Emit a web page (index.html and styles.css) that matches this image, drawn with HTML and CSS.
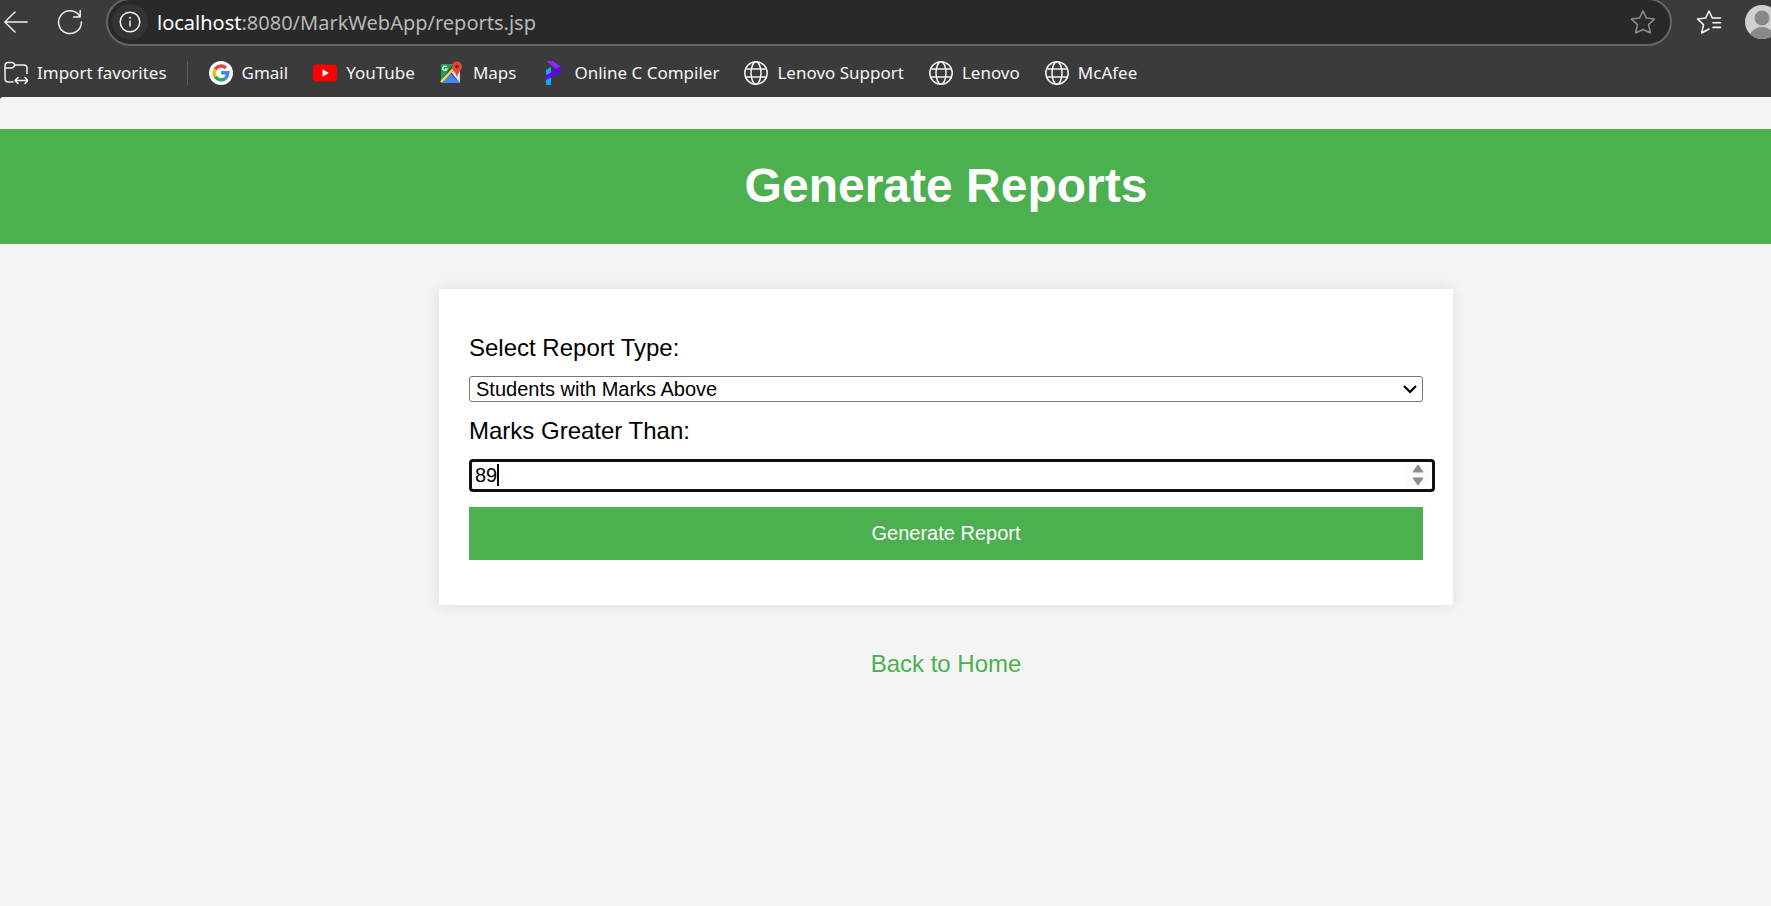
FILE: index.html
```html
<!DOCTYPE html>
<html lang="en">
<head>
<meta charset="utf-8">
<title>Generate Reports</title>
<link rel="stylesheet" href="styles.css">
</head>
<body>
<svg class="defs" aria-hidden="true">
  <symbol id="globe" viewBox="0 0 24 24"><g fill="none" stroke="#f4f4f4" stroke-width="1.5"><circle cx="12" cy="12" r="11.2"/><ellipse cx="12" cy="12" rx="5" ry="11.2"/><path d="M1.7 8h20.6M1.7 16h20.6"/></g></symbol>
</svg>
<div class="browser">
  <div class="toolbar">
    <button class="tool" aria-label="Back"><svg width="24" height="24" viewBox="0 0 24 24" fill="none" stroke="#f0f0f0" stroke-width="1.5" stroke-linecap="round" stroke-linejoin="round"><path d="M23.2 12H1M11 2 .8 12 11 22"/></svg></button>
    <button class="tool reload" aria-label="Refresh"><svg width="26" height="26" viewBox="0 0 26 26" fill="none" stroke="#f0f0f0" stroke-width="1.5" stroke-linecap="round" stroke-linejoin="round"><path d="M24.4 13A11.4 11.4 0 1 1 22.6 7M23.2 1.5V8H16.5"/></svg></button>
    <div class="address">
      <button class="info" aria-label="Site information"><svg width="22" height="22" viewBox="0 0 22 22" fill="none" stroke="#f4f4f4" stroke-width="1.5"><circle cx="11" cy="11" r="9.8"/><path d="M11 9.5v6"/><circle cx="11" cy="6.8" r="1" fill="#f4f4f4" stroke="none"/></svg></button>
      <span class="url"><span class="host">localhost</span>:8080/MarkWebApp/reports.jsp</span>
      <button class="tool star" aria-label="Add to favorites"><svg width="26" height="26" viewBox="0 0 26 26" fill="none" stroke="#8d8d8d" stroke-width="1.5" stroke-linejoin="round"><path d="m13 1.8 3.4 7.3 8 1-5.900 5.500L20.500 24 13 20.500 5.500 24l2-8.400L1.500 10.100l8-1z"/></svg></button>
    </div>
    <button class="tool favorites" aria-label="Favorites"><svg width="26" height="26" viewBox="0 0 26 26" fill="none" stroke="#f8f8f8" stroke-width="1.6" stroke-linecap="round" stroke-linejoin="round"><path d="M24.500 9H16.300L13 2 9.700 9 1.500 10l6 5.600L5.700 24l7.300-4M17 13.700h7.500M17 18.400h7.500"/></svg></button>
    <button class="tool profile" aria-label="Profile"><svg width="34" height="34" viewBox="0 0 34 34"><clipPath id="face"><circle cx="17" cy="17" r="17"/></clipPath><g clip-path="url(#face)"><path fill="#d2d0ce" d="M0 0h34v34H0z"/><circle cx="17" cy="13" r="7.500" fill="#8a8886"/><circle cx="17" cy="35" r="13" fill="#8a8886"/></g></svg></button>
  </div>
  <nav class="bookmarks">
    <a href="#" class="bookmark"><svg width="24" height="24" viewBox="0 0 24 24" fill="none" stroke="#f0f0f0" stroke-width="1.5" stroke-linecap="round" stroke-linejoin="round"><path d="M9 21H4.500Q1 21 1 17.500V5Q1 1.500 4 1.500h3.500q1.500 0 2.500 1l1 1.500h8.500Q23 4 23 7v5.500M1 7h6q1.500 0 2.500-1L11 4M11.500 19.500h12M14 16.500l-3 3 3 3M21 16.500l3 3-3 3"/></svg>Import favorites</a>
    <span class="divider"></span>
    <a href="#" class="bookmark"><svg width="24" height="24" viewBox="0 0 24 24" fill="none" stroke-width="3.400"><circle cx="12" cy="12" r="12" fill="#fff"/><path stroke="#ea4335" d="M6.200 8.300a7 7 0 0 1 10.700-1.400"/><path stroke="#fbbc04" d="M6.200 8.300a7 7 0 0 0 0 7.400"/><path stroke="#34a853" d="M6.200 15.700a7 7 0 0 0 10.200 1.700"/><path stroke="#4285f4" d="M16.400 17.400Q18.800 15.200 18.800 11.800H12.200"/></svg>Gmail</a>
    <a href="#" class="bookmark"><svg width="24" height="24" viewBox="0 0 24 24"><rect y="3.500" width="24" height="17" rx="4" fill="#f00"/><path fill="#fff" d="m9.500 8.300 6.300 3.700-6.300 3.700z"/></svg>YouTube</a>
    <a href="#" class="bookmark"><svg width="24" height="24" viewBox="0 0 24 24"><path fill="#1e9c58" d="M1 3h12L1 20z"/><path fill="#4285f4" d="m10 12 10 10H1z"/><path fill="#dfe3e8" d="m11 11 9-3v14z"/><path stroke="#fdd835" stroke-width="2.500" d="M1 21 15 6"/><path fill="#e5473a" d="M11.800 5.600a5.100 5.100 0 0 1 10.200 0C22 10 17.600 11 17 17c-.6-6-5.200-7-5.200-11.400z"/><circle cx="17" cy="5.500" r="1.800" fill="#7b211b"/><path fill="none" stroke="#fff" stroke-width="1.200" d="M6.800 6A2.200 2.200 0 1 0 7 8H5"/></svg>Maps</a>
    <a href="#" class="bookmark"><svg width="24" height="24" viewBox="0 0 24 24"><path fill="#0aa8f8" d="M5 9l5-3v18H5z"/><path fill="#8c2cf0" d="M5 0h7l8 6v5l-4-2z"/><path fill="#6200ea" d="M20 6v5L5 19v-5l11-7z"/><path fill="#0aa8f8" d="m5 9 5-3v6l-5 2z"/></svg>Online C Compiler</a>
    <a href="#" class="bookmark"><svg width="24" height="24"><use href="#globe"/></svg>Lenovo Support</a>
    <a href="#" class="bookmark"><svg width="24" height="24"><use href="#globe"/></svg>Lenovo</a>
    <a href="#" class="bookmark"><svg width="24" height="24"><use href="#globe"/></svg>McAfee</a>
  </nav>
</div>
<div class="page">
  <header class="banner"><h1>Generate Reports</h1></header>
  <main class="content">
    <form class="card">
      <label for="type">Select Report Type:</label>
      <div class="field">
        <select id="type" class="select"><option>Students with Marks Above</option></select>
        <svg class="chevron" width="14" height="9" viewBox="0 0 14 9" fill="none" stroke="#000" stroke-width="2.200"><path d="m1 1 6 6 6-6"/></svg>
      </div>
      <label for="marks">Marks Greater Than:</label>
      <div class="field wide">
        <input id="marks" class="number" type="number" value="89">
        <span class="caret"></span>
        <svg class="spinner" width="22" height="22" viewBox="0 0 22 22"><path fill="#fafafa" d="M0 0h22v22H0z"/><path fill="#8b8b8b" stroke="#8b8b8b" stroke-linejoin="round" d="m11 1 5 7H6zM11 21l5-7H6z"/></svg>
      </div>
      <button type="submit" class="submit">Generate Report</button>
    </form>
    <a href="#" class="home">Back to Home</a>
  </main>
</div>
</body>
</html>
```
FILE: styles.css
```css
* { box-sizing: border-box; }
body {
  margin: 0;
  min-height: 100vh;
  overflow-x: hidden;
  background: #3b3b3b;
  font-family: "Liberation Sans", Arial, sans-serif;
  display: flex;
  flex-direction: column;
}
button { border: 0; background: none; padding: 0; font: inherit; }
svg { display: block; flex: none; }
.defs { position: absolute; width: 0; height: 0; }

.browser { background: #3b3b3b; font-family: "Noto Sans", sans-serif; overflow: hidden; }
.toolbar { display: flex; align-items: center; height: 44px; padding-left: 4px; }
.tool { display: flex; flex: none; }
.reload { margin: 0 23px 0 29px; }
.address {
  flex: 1;
  display: flex;
  align-items: center;
  height: 48px;
  padding: 0 14px 0 4px;
  border: 2px solid #666;
  border-radius: 24px;
  background: #292929;
}
.info {
  display: grid;
  place-items: center;
  width: 36px;
  height: 36px;
  border-radius: 50%;
  background: #343434;
}
.url { flex: 1; margin-left: 9px; font-size: 20px; color: #b8b8b8; }
.host { color: #fff; }
.favorites { margin: 0 23px 0 24px; }
.profile { margin-right: -8px; }

.bookmarks { display: flex; align-items: center; gap: 25px; height: 53px; padding: 8px 4px 3px; }
.bookmark {
  display: flex;
  align-items: center;
  gap: 9px;
  font-size: 17px;
  line-height: 24px;
  color: #f4f4f4;
  text-decoration: none;
  white-space: nowrap;
}
.divider { width: 1px; height: 24px; margin: 0 -4px 0 -5px; background: #5c5c5c; }

.page {
  flex: 1;
  padding-top: 32px;
  border-top-left-radius: 3px;
  background: #f4f4f4;
  font-size: 24px;
  line-height: 27px;
}
.banner {
  padding: 29px 0 31px 121px;
  background: #4caf50;
  color: #fff;
  text-align: center;
}
.banner h1 { margin: 0; font-size: 48px; line-height: 55px; }
.content {
  display: flex;
  flex-direction: column;
  align-items: center;
  padding: 45px 0 0 121px;
}
.card {
  width: 62%;
  min-width: 600px;
  max-width: 1014px;
  padding: 45px 30px;
  background: #fff;
  box-shadow: 0 0 15px rgba(0, 0, 0, 0.1);
}
.card label { display: block; }
.field { position: relative; margin: 15px 0; }
.select, .number {
  display: block;
  width: 100%;
  margin: 0;
  appearance: none;
  background: #fff;
  color: #000;
  font-family: inherit;
  font-size: 20px;
}
.select {
  height: 26px;
  padding: 0 6px;
  border: 1px solid #767676;
  border-radius: 3px;
  line-height: 24px;
}
.chevron { position: absolute; right: 6px; top: 9px; }
.wide { margin-right: -12px; }
.number {
  height: 33px;
  padding: 0 3px;
  border: 3px solid #101010;
  border-radius: 4px;
  appearance: textfield;
}
.number::-webkit-inner-spin-button { appearance: none; margin: 0; }
.caret { position: absolute; left: 28px; top: 5px; width: 2px; height: 22px; background: #000; }
.spinner { position: absolute; right: 6px; top: 5px; }
.submit {
  display: block;
  width: 100%;
  padding: 15px;
  background: #4caf50;
  color: #fff;
  font-size: 20px;
  line-height: 23px;
}
.home { margin-top: 45px; color: #4caf50; text-decoration: none; }
```
